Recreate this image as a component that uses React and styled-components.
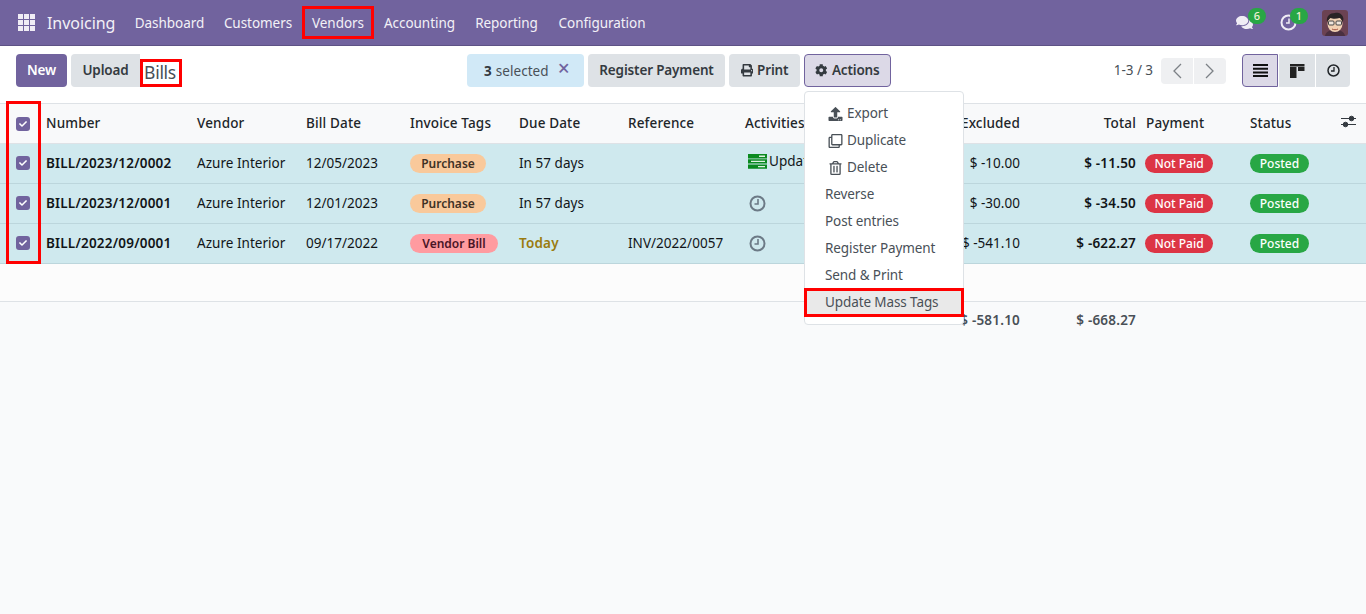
import React from 'react';
import styled, { createGlobalStyle } from 'styled-components';
import { FaCheck, FaPrint, FaCog, FaUpload, FaRegTrashAlt, FaRegClone, FaComments } from 'react-icons/fa';

const Global = createGlobalStyle`
  html, body { margin: 0; padding: 0; height: 100%; background: #f9fafb; }
  #root { height: 100%; }
  * { box-sizing: border-box; }
`;
const FONT = `"Noto Sans", "Open Sans", sans-serif`;
const PRIMARY = '#71639e';
const RED = '#ff0000';

const Page = styled.div`
  min-height: 100vh; overflow: hidden; font-family: ${FONT}; font-size: 13.5px; color: #212529;
  background: #f9fafb; display: flex; flex-direction: column;
`;
const Nav = styled.header`
  height: 46px; background: ${PRIMARY}; border-bottom: 1px solid #5e5285; display: flex; align-items: center;
  padding: 0 18px; color: #f3f1f7; flex: none;
`;
const AppsGrid = styled.span`
  display: grid; grid-template-columns: repeat(3, 5px); grid-auto-rows: 5px; gap: 1px; width: 17px; height: 17px; margin-right: 12px;
  i { background: #f0edf5; display: block; }
`;
const Brand = styled.span`font-size: 16px; width: 78px; letter-spacing: -0.05px;`;
const Menu = styled.nav`display: flex; align-items: center; flex: 1; height: 100%;`;
const NavItem = styled.a`
  height: 33px; display: flex; align-items: center; justify-content: center; font-size: 13.5px; color: #f3f1f7;
  outline: ${p => (p.$marked ? `3px solid ${RED}` : 'none')}; outline-offset: -3px;
  width: ${p => p.$w}px; white-space: nowrap; letter-spacing: -0.05px;
`;
const Tray = styled.div`display: flex; align-items: center; height: 100%;`;
const TrayIcon = styled.span`
  position: relative; display: inline-flex; width: ${p => p.$w}px; height: 26px; align-items: center; color: #f0edf5; font-size: 17px;
`;
const Badge = styled.b`
  position: absolute; left: ${p => p.$l}px; top: -2px; width: 18px; height: 16px; border-radius: 8px; background: #28a745; color: #f4f0d8;
  font-size: 11px; font-weight: 500; display: flex; align-items: center; justify-content: center;
`;
const AvatarSvg = styled.svg`border-radius: 3px; display: block;`;
const Panel = styled.section`
  height: 57px; background: #fff; padding: 8px 16px 16px; display: grid; grid-template-columns: 451px auto 1fr; flex: none;
`;
const Group = styled.div`display: flex; align-items: ${p => p.$align || 'stretch'}; gap: ${p => p.$gap ?? 4}px; justify-content: ${p => p.$justify || 'flex-start'};`;
const Button = styled.button`
  font: 600 13.5px ${FONT}; letter-spacing: -0.15px; height: 33px; width: ${p => p.$w}px; padding: 0 0 2px; border-radius: 4px; border: 1px solid transparent;
  display: inline-flex; align-items: center; justify-content: center; gap: 4px; white-space: nowrap;
  background: ${p => (p.$variant === 'primary' ? PRIMARY : p.$variant === 'active' ? '#dcd9e7' : '#dee2e6')};
  color: ${p => (p.$variant === 'primary' ? '#fff' : '#343a40')};
  border-color: ${p => (p.$variant === 'active' ? PRIMARY : 'transparent')};
  svg { font-size: 12.5px; margin-top: 2px; }
`;
const Title = styled.span`
  width: 42px; height: 28px; margin: 5px 0 0 -4px; border: 3px solid ${RED}; padding: 0 2px 3px 0; font-size: 17.5px; color: #495057; display: flex; align-items: center; justify-content: center; letter-spacing: -0.3px;
`;
const Upload = styled(Button)`border-radius: 4px 0 0 4px;`;
const Selected = styled.div`
  width: 117px; height: 33px; background: #d1e9f7; border-radius: 4px; display: flex; align-items: center; padding-left: 17px; font-size: 13.5px; color: #495057; white-space: nowrap; letter-spacing: 0.05px;
  b { color: #343a40; font-weight: 700; margin-right: 4px; }
  span { color: ${PRIMARY}; font-size: 21px; margin-left: 9px; line-height: 1; margin-top: -4px; font-weight: 500; }
`;
const ActionsWrap = styled.div`position: relative; display: flex;`;
const Dropdown = styled.ul`
  position: absolute; z-index: 5; top: 37px; left: 0; width: 160px; margin: 0; padding: 8px 0; background: #fff; border: 1px solid #dee2e6; border-radius: 4px; list-style: none;
`;
const DropItem = styled.li`
  height: 27px; display: flex; align-items: center; padding: 0 0 2px ${p => (p.$icon ? 23 : 20)}px; color: #495057; font-size: 13.5px; letter-spacing: -0.1px; white-space: nowrap;
  background: ${p => (p.$marked ? '#e9e9e9' : 'transparent')};
  outline: ${p => (p.$marked ? `3px solid ${RED}` : 'none')}; outline-offset: -2px;
  svg { flex: none; width: 15px; font-size: 14px; margin: 2px 4px 0 0; color: #495057; }
`;
const PagerText = styled.span`font-size: 13.5px; color: #495057; margin: 0 8px 2px 0; letter-spacing: -0.05px;`;
const PagerGroup = styled.div`display: flex; gap: 1px; margin-right: 16px;`;
const PagerBtn = styled.span`
  width: 32px; height: 26px; background: #eff0f2; display: flex; align-items: center; justify-content: center; color: #7c8186;
  border-radius: ${p => (p.$first ? '4px 0 0 4px' : '0 4px 4px 0')};
`;
const ViewGroup = styled.div`display: flex; gap: 1px;`;
const ViewBtn = styled.span`
  width: ${p => p.$w}px; height: 33px; display: flex; align-items: center; justify-content: center; color: #212529; font-size: 13px;
  background: ${p => (p.$active ? '#dcd9e7' : '#dee2e6')}; border: 1px solid ${p => (p.$active ? PRIMARY : 'transparent')};
  border-radius: ${p => p.$r};
`;
const TableWrap = styled.div`position: relative;`;
const Marker = styled.div`
  position: absolute; left: 6px; top: -2px; width: 35px; height: 163px; border: 3px solid ${RED}; z-index: 3; pointer-events: none;
`;
const Table = styled.table`
  width: 1366px; table-layout: fixed; border-collapse: separate; border-spacing: 0; font-size: 13.5px;
`;
const Th = styled.th`
  height: 41px; padding: 0 4px 2px ${p => p.$pl ?? 6}px; background: #f8f9fa; border-top: 1px solid #dee2e6; border-bottom: 1px solid #dee2e6; font-weight: 500; color: #212529; letter-spacing: 0.15px;
  text-align: ${p => (p.$right ? 'right' : 'left')}; white-space: nowrap; overflow: hidden;
`;
const Td = styled.td`
  height: 40px; padding: 0 4px 2px ${p => p.$pl ?? 6}px; background: #cfe9ee; border-bottom: 1px solid #bcd6dc; color: ${p => p.$color || '#111518'}; letter-spacing: ${p => (p.$weight ? 0.2 : 0.03)}px;
  font-weight: ${p => p.$weight || 400}; text-align: ${p => (p.$right ? 'right' : 'left')}; white-space: nowrap;
`;
const FillerTd = styled.td`height: 38px; background: #fcfcfc; border-bottom: 1px solid #dee2e6;`;
const FootTd = styled.td`
  height: 37px; padding: 0 4px 2px 6px; color: #495057; font-weight: 600; text-align: right; white-space: nowrap; letter-spacing: 0.2px;
`;
const Check = styled.span`
  width: 14px; height: 14px; margin: ${p => p.$mt}px 0 0 10px; border-radius: 3px; background: ${PRIMARY}; color: #fff; display: flex; align-items: center; justify-content: center; font-size: 8px;
`;
const Pill = styled.span`
  display: inline-flex; align-items: center; justify-content: center; vertical-align: middle; height: 19px; margin-top: 2px; padding-bottom: 1px; width: ${p => p.$w}px; border-radius: 10px; font-size: 12px; font-weight: ${p => p.$weight || 500}; letter-spacing: 0px;
  background: ${p => p.$bg}; color: ${p => p.$fg};
`;
const ActivityCell = styled.span`display: inline-flex; align-items: center; gap: 2px; margin-left: 3px; color: #111518;`;
const ClockMark = styled.span`display: inline-flex; margin: 0 0 0 4px; vertical-align: middle;`;
const SlidersWrap = styled.span`display: inline-flex; margin-left: 1px; margin-top: 2px;`;

const rows = [
  { no: 'BILL/2023/12/0002', date: '12/05/2023', tag: 'Purchase', due: 'In 57 days', ref: '', act: true, ex: '$ -10.00', total: '$ -11.50' },
  { no: 'BILL/2023/12/0001', date: '12/01/2023', tag: 'Purchase', due: 'In 57 days', ref: '', ex: '$ -30.00', total: '$ -34.50' },
  { no: 'BILL/2022/09/0001', date: '09/17/2022', tag: 'Vendor Bill', due: 'Today', ref: 'INV/2022/0057', ex: '$ -541.10', total: '$ -622.27' },
];
const widths = [40, 151, 109, 104, 109, 109, 117, 161, 124, 116, 104, 90, 32];
const heads = ['Number', 'Vendor', 'Bill Date', 'Invoice Tags', 'Due Date', 'Reference', 'Activities'];

const Chevron = ({ dir }) => (
  <svg width="10" height="16" viewBox="0 0 10 16" fill="none" stroke="currentColor" strokeWidth="1.3">
    <path d={dir === 'l' ? 'M9 1 2 8l7 7' : 'M1 1l7 7-7 7'} />
  </svg>
);
const ListIcon = () => (
  <svg width="15" height="13" viewBox="0 0 15 13" fill="#111"><path d="M0 0h15v2H0zM0 3.700h15v2H0zM0 7.400h15v2H0zM0 11h15v2H0z" /></svg>
);
const KanbanIcon = () => (
  <svg width="15" height="14" viewBox="0 0 15 14" fill="#222"><path d="M0 0h14.500v2.600H0zM0 3h6.500v11H0zM8 3h6.500v4H8z" /></svg>
);
const ViewClock = () => (
  <svg width="13" height="13" viewBox="0 0 13 13" fill="none" stroke="#212529" strokeWidth="1.500"><circle cx="6.500" cy="6.500" r="5.500" /><path strokeWidth="1.300" d="M7 3v4H4" /></svg>
);
const Sliders = () => (
  <svg width="15" height="13" viewBox="0 0 15 13" fill="none" stroke="#343a40"><path d="M0 3.500h15M0 9.500h15" /><circle cx="10.500" cy="3.500" r="2.300" fill="#343a40" /><circle cx="4.500" cy="9.500" r="2.300" fill="#343a40" /></svg>
);
const ServerIcon = () => (
  <svg width="19" height="15" viewBox="0 0 19 15"><path fill="#0a8a1f" d="M0 0h19v4.400H0zM0 5.200h19v4.400H0zM0 10.400h19v4.400H0z" /><path fill="#dff2e2" d="M11 1.500h6v1.400h-6zM3 6.800h14v1.200H3zM10 11.900h7v1.400h-7z" /></svg>
);
const ClockThick = () => (
  <svg width="17" height="17" viewBox="0 0 17 17" fill="none" stroke="#6c7a86" strokeWidth="2"><circle cx="8.500" cy="8.500" r="7" /><path strokeWidth="1.600" d="M9 4v5H5.500" /></svg>
);
const TrayClock = () => (
  <svg width="17" height="17" viewBox="0 0 17 17" fill="none" stroke="#f0edf5" strokeWidth="2"><circle cx="8.500" cy="8.500" r="7" /><path strokeWidth="1.500" d="M9 4.500V9H6" /></svg>
);
const Avatar = () => (
  <AvatarSvg width="26" height="26" viewBox="0 0 26 26">
    <rect width="26" height="26" fill="#6b4252" />
    <path d="M3 26c1-5 5-6 10-6s9 1 10 6z" fill="#4a3040" />
    <ellipse cx="13" cy="14" rx="7.500" ry="8" fill="#f2d2b4" />
    <path d="M5 12C4 6 8 3 13 3c2-1 7 0 8 4 1 2 0 4-.5 5-1-3-2-4-3-4-3 1-7 1-9 0-1 1-2.500 2-3.500 4z" fill="#2a2426" />
    <rect x="6.500" y="11" width="5.500" height="4" rx="1" fill="#efe6dc" stroke="#444" strokeWidth="1" />
    <rect x="14" y="11" width="5.500" height="4" rx="1" fill="#efe6dc" stroke="#444" strokeWidth="1" />
    <path d="M10 19c2 1 4 1 6 0" stroke="#a5533f" strokeWidth="1" fill="none" />
  </AvatarSvg>
);

export default function App() {
  return (
    <Page>
      <Global />
      <Nav>
        <AppsGrid>{Array.from({ length: 9 }, (_, i) => <i key={i} />)}</AppsGrid>
        <Brand>Invoicing</Brand>
        <Menu>
          <NavItem $w={89}>Dashboard</NavItem>
          <NavItem $w={88}>Customers</NavItem>
          <NavItem $w={72} $marked>Vendors</NavItem>
          <NavItem $w={91}>Accounting</NavItem>
          <NavItem $w={83}>Reporting</NavItem>
          <NavItem $w={108}>Configuration</NavItem>
        </Menu>
        <Tray>
          <TrayIcon $w={44}><FaComments /><Badge $l={12}>6</Badge></TrayIcon>
          <TrayIcon $w={42}><TrayClock /><Badge $l={10}>1</Badge></TrayIcon>
          <Avatar />
        </Tray>
      </Nav>
      <Panel>
        <Group>
          <Button $variant="primary" $w={51}>New</Button>
          <Upload $w={69}>Upload</Upload>
          <Title>Bills</Title>
        </Group>
        <Group>
          <Selected><b>3</b> selected <span>×</span></Selected>
          <Button $w={137}>Register Payment</Button>
          <Button $w={71}><FaPrint />Print</Button>
          <ActionsWrap>
            <Button $w={87} $variant="active"><FaCog />Actions</Button>
            <Dropdown>
              <DropItem $icon><FaUpload />Export</DropItem>
              <DropItem $icon><FaRegClone />Duplicate</DropItem>
              <DropItem $icon><FaRegTrashAlt />Delete</DropItem>
              <DropItem>Reverse</DropItem>
              <DropItem>Post entries</DropItem>
              <DropItem>Register Payment</DropItem>
              <DropItem>Send &amp; Print</DropItem>
              <DropItem $marked>Update Mass Tags</DropItem>
            </Dropdown>
          </ActionsWrap>
        </Group>
        <Group $align="center" $gap={0} $justify="flex-end">
          <PagerText>1-3 / 3</PagerText>
          <PagerGroup>
            <PagerBtn $first><Chevron dir="l" /></PagerBtn>
            <PagerBtn><Chevron dir="r" /></PagerBtn>
          </PagerGroup>
          <ViewGroup>
            <ViewBtn $w={36} $active $r="4px 0 0 4px"><ListIcon /></ViewBtn>
            <ViewBtn $w={36} $r="0"><KanbanIcon /></ViewBtn>
            <ViewBtn $w={34} $r="0 4px 4px 0"><ViewClock /></ViewBtn>
          </ViewGroup>
        </Group>
      </Panel>
      <TableWrap>
        <Marker />
        <Table>
          <colgroup>{widths.map((w, i) => <col key={i} width={w} />)}</colgroup>
          <thead>
            <tr>
              <Th><Check $mt={3}><FaCheck /></Check></Th>
              {heads.map(h => <Th key={h}>{h}</Th>)}
              <Th $right>Tax Excluded</Th>
              <Th $right>Total</Th>
              <Th>Payment</Th>
              <Th>Status</Th>
              <Th><SlidersWrap><Sliders /></SlidersWrap></Th>
            </tr>
          </thead>
          <tbody>
            {rows.map(r => (
              <tr key={r.no}>
                <Td><Check $mt={1}><FaCheck /></Check></Td>
                <Td $weight={600}>{r.no}</Td>
                <Td>Azure Interior</Td>
                <Td>{r.date}</Td>
                <Td>
                  {r.tag === 'Purchase'
                    ? <Pill $w={76} $weight={600} $bg="#f9c99b" $fg="#3f3226">{r.tag}</Pill>
                    : <Pill $w={88} $weight={600} $bg="#ff9ba0" $fg="#4a1526">{r.tag}</Pill>}
                </Td>
                <Td $weight={r.due === 'Today' ? 600 : undefined} $color={r.due === 'Today' ? '#9a7b0f' : undefined}>{r.due}</Td>
                <Td>{r.ref}</Td>
                <Td>
                  {r.act
                    ? <ActivityCell><ServerIcon />Update</ActivityCell>
                    : <ClockMark><ClockThick /></ClockMark>}
                </Td>
                <Td $right>{r.ex}</Td>
                <Td $right $weight={600}>{r.total}</Td>
                <Td $pl={5}><Pill $w={68} $bg="#dc3545" $fg="#fff">Not Paid</Pill></Td>
                <Td><Pill $w={59} $bg="#28a745" $fg="#fff">Posted</Pill></Td>
                <Td />
              </tr>
            ))}
            <tr><FillerTd colSpan={13} /></tr>
          </tbody>
          <tfoot>
            <tr>
              <FootTd colSpan={8} />
              <FootTd>$ -581.10</FootTd>
              <FootTd>$ -668.27</FootTd>
              <FootTd colSpan={3} />
            </tr>
          </tfoot>
        </Table>
      </TableWrap>
    </Page>
  );
}
